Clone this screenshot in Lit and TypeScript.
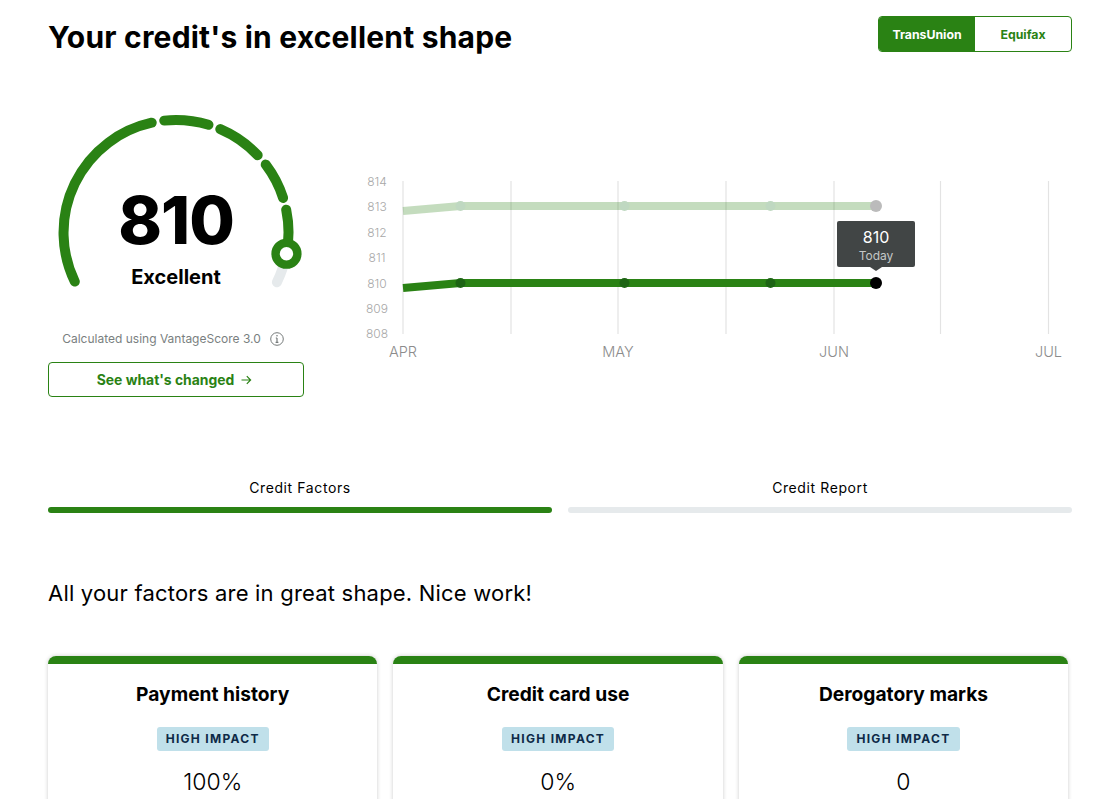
import { LitElement, css, html, svg } from 'lit'
import { customElement } from 'lit/decorators.js'

const GREEN = '#2a8214'

// gauge geometry, relative to the gauge box
const CX = 128
const CY = 112.5
const R = 112.5

const polar = (deg: number) => {
  const a = (deg * Math.PI) / 180
  return [CX + R * Math.cos(a), CY + R * Math.sin(a)]
}

const arc = (from: number, to: number) => {
  const [x1, y1] = polar(from)
  const [x2, y2] = polar(to)
  const large = to - from > 180 ? 1 : 0
  return `M${x1.toFixed(1)} ${y1.toFixed(1)}A${R} ${R} 0 ${large} 1 ${x2.toFixed(1)} ${y2.toFixed(1)}`
}

const SEGMENTS = [
  [154.1, 257.5],
  [264, 286.8],
  [293.2, 316.6],
  [322.9, 342.1],
  [348.3, 371]
]

const GRID_X = [403, 511, 618, 726, 834, 940.5, 1048.5]
const Y_LABELS = [814, 813, 812, 811, 810, 809, 808]
const MONTHS = [['APR', 403], ['MAY', 618], ['JUN', 834], ['JUL', 1048.5]] as const
const DOTS = [460.5, 624.5, 770.5]

const FACTORS = [
  { name: 'Payment history', impact: 'HIGH IMPACT', value: '100%' },
  { name: 'Credit card use', impact: 'HIGH IMPACT', value: '0%' },
  { name: 'Derogatory marks', impact: 'HIGH IMPACT', value: '0' }
]

@customElement('app-root')
export class AppRoot extends LitElement {
  static styles = css`
    :host {
      display: block;
      height: 799px;
      overflow: hidden;
      background: #fff;
      color: #000;
      font-family: 'Inter', 'Liberation Sans', sans-serif;
    }

    .page {
      padding: 0 45px 0 48px;
    }

    .top {
      display: flex;
      justify-content: space-between;
      align-items: flex-start;
      padding-top: 16px;
    }

    h1 {
      margin: 0;
      font-size: 30px;
      line-height: 42px;
      font-weight: 700;
      letter-spacing: 0.2px;
    }

    .switch {
      display: flex;
      width: 192px;
      height: 34px;
      border: 1px solid #2a8214;
      border-radius: 4px;
      overflow: hidden;
      font-size: 12.3px;
      font-weight: 700;
    }

    .switch div {
      flex: 1;
      display: flex;
      align-items: center;
      justify-content: center;
      color: #2a8214;
    }

    .switch .on {
      background: #2a8214;
      color: #fff;
    }

    .hero {
      display: flex;
      margin-top: 62px;
      height: 358px;
    }

    .score {
      width: 256px;
      flex: none;
      display: flex;
      flex-direction: column;
    }

    .gauge {
      position: relative;
      height: 172px;
    }

    .gauge svg {
      display: block;
      overflow: visible;
    }

    .center {
      position: absolute;
      left: 0;
      right: 0;
      top: 63px;
      text-align: center;
    }

    .number {
      font-size: 66px;
      line-height: 74px;
      font-weight: 800;
      letter-spacing: -1px;
    }

    .label {
      font-size: 20px;
      line-height: 26px;
      font-weight: 700;
      margin-top: 7px;
    }

    .calc {
      display: flex;
      align-items: center;
      justify-content: center;
      gap: 9px;
      margin-top: 38px;
      padding-right: 6px;
      font-size: 12px;
      line-height: 18px;
      color: #7a7f7f;
    }

    .cta {
      display: flex;
      align-items: center;
      justify-content: center;
      gap: 6px;
      height: 33px;
      margin-top: 14px;
      padding-right: 3px;
      border: 1px solid #2a8214;
      border-radius: 4px;
      color: #2a8214;
      font-size: 13.9px;
      font-weight: 700;
    }

    .chart {
      position: absolute;
      left: 0;
      top: 0;
      pointer-events: none;
    }

    .chart text {
      font-family: 'Inter', 'Liberation Sans', sans-serif;
      font-weight: 300;
    }

    .tip {
      position: absolute;
      left: 837px;
      top: 221px;
      width: 78px;
      height: 46px;
      box-sizing: border-box;
      padding-top: 6px;
      border-radius: 2px;
      background: #414545;
      color: #fff;
      text-align: center;
      font-size: 16px;
      line-height: 20px;
    }

    .tip small {
      display: block;
      margin-top: 1px;
      font-size: 12px;
      line-height: 16px;
      color: #c4c7c7;
    }

    .tip::after {
      content: '';
      position: absolute;
      left: 50%;
      bottom: -4px;
      margin-left: -6px;
      border-left: 6px solid transparent;
      border-right: 6px solid transparent;
      border-top: 4px solid #414545;
    }

    .tabs {
      display: grid;
      grid-template-columns: 1fr 1fr;
      gap: 16px;
      text-align: center;
      font-size: 14px;
      line-height: 20px;
      letter-spacing: 0.6px;
    }

    .tab::after {
      content: '';
      display: block;
      height: 6px;
      margin-top: 9px;
      border-radius: 3px;
      background: #e6eaec;
    }

    .tab.on::after {
      background: #2a8214;
    }

    .lead {
      margin: 64px 0 0;
      font-size: 22px;
      line-height: 32px;
      font-weight: 400;
      letter-spacing: 0.2px;
    }

    .cards {
      display: grid;
      grid-template-columns: repeat(3, 329.4px);
      gap: 16px;
      margin-top: 47px;
    }

    .card {
      height: 300px;
      border-top: 8px solid #2a8214;
      border-radius: 8px 8px 0 0;
      box-shadow: 0 0 4px rgba(0, 0, 0, 0.2);
      text-align: center;
    }

    .card h3 {
      margin: 17px 0 0;
      font-size: 19.2px;
      line-height: 26px;
      font-weight: 700;
    }

    .badge {
      display: inline-block;
      margin-top: 20px;
      padding: 0 9px;
      height: 24px;
      line-height: 24px;
      border-radius: 3px;
      background: #c0e0ea;
      color: #0e2a47;
      font-size: 12px;
      font-weight: 700;
      letter-spacing: 1.3px;
    }

    .value {
      margin-top: 16px;
      font-size: 23px;
      line-height: 30px;
      font-weight: 300;
    }
  `

  renderGauge () {
    const [kx, ky] = polar(10.9)
    return html`
      <svg width="256" height="172" viewBox="0 0 256 172" fill="none" stroke-linecap="round" stroke-width="10">
        <path d=${arc(11, 26.2)} stroke="#e6eaec"></path>
        ${SEGMENTS.map(([a, b]) => svg`<path d=${arc(a, b)} stroke=${GREEN}></path>`)}
        <circle cx=${kx} cy=${ky} r="10.9" fill="#fff" stroke=${GREEN} stroke-width="8.4"></circle>
      </svg>
    `
  }

  renderChart () {
    return html`
      <svg class="chart" width="1117" height="400" viewBox="0 0 1117 400" fill="none">
        ${GRID_X.map(x => svg`<line x1=${x} x2=${x} y1="181" y2="334" stroke="#e3e3e3" stroke-width="1.2"></line>`)}
        ${Y_LABELS.map((v, i) => svg`<text x="377" y=${186 + i * 25.4} text-anchor="middle" font-size="12" fill="#a8a8a8">${v}</text>`)}
        ${MONTHS.map(([m, x]) => svg`<text x=${x} y="357" text-anchor="middle" font-size="14.5" fill="#8c8c8c">${m}</text>`)}
        <polyline points="403,211 460.5,206 876,206" stroke=${GREEN} stroke-opacity="0.28" stroke-width="8"></polyline>
        <polyline points="403,288 460.5,283 876,283" stroke=${GREEN} stroke-width="8"></polyline>
        ${DOTS.map(x => svg`
          <circle cx=${x} cy="206" r="5" fill="#bfd8c1"></circle>
          <circle cx=${x} cy="283" r="5" fill="#1d6414"></circle>
        `)}
        <circle cx="876" cy="206" r="6" fill="#bbb"></circle>
        <circle cx="876" cy="283" r="6" fill="#000"></circle>
      </svg>
    `
  }

  render () {
    return html`
      <div class="page">
        <div class="top">
          <h1>Your credit's in excellent shape</h1>
          <div class="switch">
            <div class="on">TransUnion</div>
            <div>Equifax</div>
          </div>
        </div>

        <div class="hero">
          <div class="score">
            <div class="gauge">
              ${this.renderGauge()}
              <div class="center">
                <div class="number">810</div>
                <div class="label">Excellent</div>
              </div>
            </div>
            <div class="calc">
              <span>Calculated using VantageScore 3.0</span>
              <svg width="14" height="14" viewBox="0 0 14 14" fill="none" stroke="#757a7a">
                <circle cx="7" cy="7" r="6.3"></circle>
                <path d="M7 6v4.4M5.6 10.4h2.8M5.8 6h1.2" stroke-width="1.2"></path>
                <circle cx="7" cy="3.8" r="0.8" fill="#757a7a" stroke="none"></circle>
              </svg>
            </div>
            <div class="cta">
              See what's changed
              <svg width="12" height="12" viewBox="0 0 12 12" fill="none" stroke="#2a8214" stroke-width="1.2">
                <path d="M1.5 6h9M6.8 2.2 10.6 6 6.8 9.8"></path>
              </svg>
            </div>
          </div>
        </div>

        ${this.renderChart()}
        <div class="tip">810<small>Today</small></div>

        <div class="tabs">
          <div class="tab on">Credit Factors</div>
          <div class="tab">Credit Report</div>
        </div>

        <p class="lead">All your factors are in great shape. Nice work!</p>

        <div class="cards">
          ${FACTORS.map(f => html`
            <div class="card">
              <h3>${f.name}</h3>
              <div class="badge">${f.impact}</div>
              <div class="value">${f.value}</div>
            </div>
          `)}
        </div>
      </div>
    `
  }
}
